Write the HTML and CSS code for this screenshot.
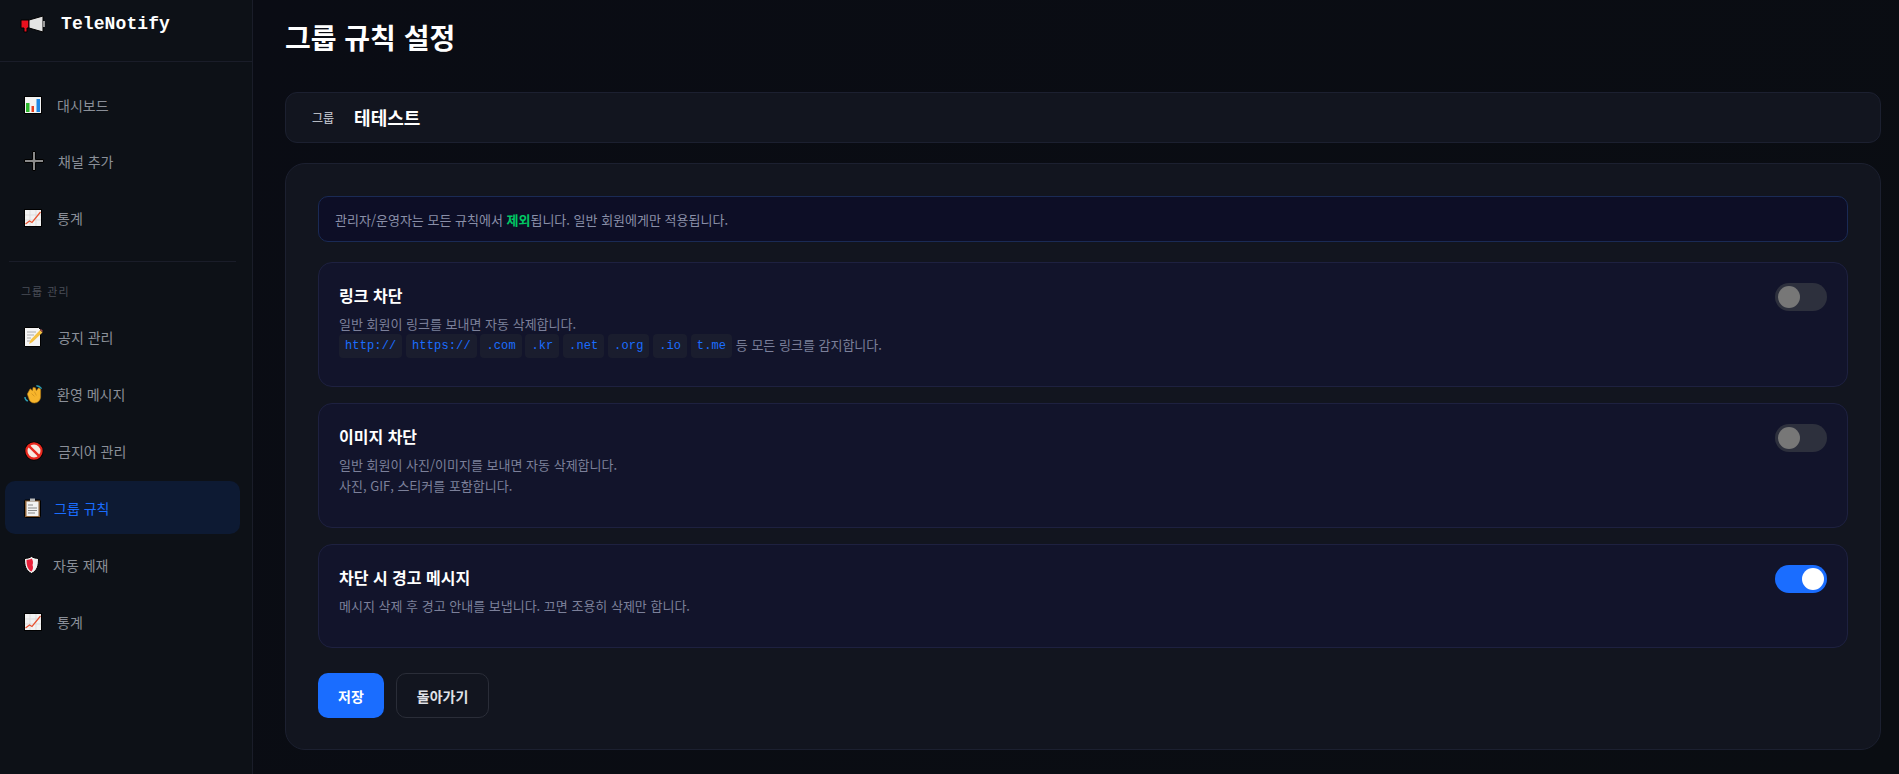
FILE: index.html
```html
<!DOCTYPE html>
<html lang="ko">
<head>
<meta charset="utf-8">
<title>그룹 규칙 설정</title>
<link rel="stylesheet" href="styles.css">
</head>
<body>
<div class="app">
  <aside class="sidebar">
    <div class="brand">
      <svg class="brand-icon" viewBox="0 0 26 18"><path d="M1 5h8v8H7v4H4v-4H1z" fill="#e8101e" stroke="#000"/><path d="M9 5l14-4v16L9 13z" fill="#e4e4e4" stroke="#000"/><path d="M23 6h2v6h-2z" fill="#999"/></svg>
      <span class="brand-name">TeleNotify</span>
    </div>
    <nav class="nav">
      <a class="nav-item"><svg class="ico i18" viewBox="0 0 18 18"><rect x=".5" y=".5" width="17" height="17" fill="#f4f4f4" stroke="#000"/><path d="M2 7h3.500v9H2z" fill="#2eb82e"/><path d="M7.500 10H10v6H7.500z" fill="#e8401e"/><path d="M12.500 3H16v13h-3.500z" fill="#1e88e5"/></svg>대시보드</a>
      <a class="nav-item"><svg class="ico i20" viewBox="0 0 20 20"><path d="M8.500 .5h3v8h8v3h-8v8h-3v-8h-8v-3h8z" fill="#8a8a8a" stroke="#000"/></svg>채널 추가</a>
      <a class="nav-item"><svg class="ico i18" viewBox="0 0 18 18"><rect x=".5" y=".5" width="17" height="17" fill="#f2f2f2" stroke="#000"/><path d="M1 6h16M1 11h16M6 1v16M12 1v16" stroke="#d8d8d8" stroke-width=".7"/><path d="M1.500 15l4-3 2.500 1.500L16.500 3" fill="none" stroke="#e8502e" stroke-width="1.200"/></svg>통계</a>
      <div class="nav-divider"></div>
      <div class="nav-label">그룹 관리</div>
      <a class="nav-item"><svg class="ico i20" viewBox="0 0 20 20"><path d="M.5.500h14l2 2v17H.5z" fill="#f4f4f4" stroke="#000"/><path d="M3 5h9M3 8h7M3 11h4M3 14h3" stroke="#aaa"/><path d="M5 17l1.500-4L16 3l2.500 2.500-10 9.500z" fill="#f5c243"/><path d="M16 3l1-1 2 2-1 1z" fill="#a04a4a"/></svg>공지 관리</a>
      <a class="nav-item"><svg class="ico i19" viewBox="0 0 20 20"><path d="M3.500 9.500L6.500 4 9 6l.5-3.500L12 3l1 3 2.500-3 2 1.500L17.500 13c-.5 3.500-3 6-6.500 6-3 0-5.500-2-6-5z" fill="#f7b52c" stroke="#b37a12" stroke-width=".6"/><path d="M8 9l3 3M11 7l2 4" stroke="#c58a1a" stroke-width=".7"/><path d="M1 12.500c0 2 1 3.500 3 4.500M13 .8c2 0 4 1 5.500 3" fill="none" stroke="#2b9db3" stroke-width="1.500"/></svg>환영 메시지</a>
      <a class="nav-item"><svg class="ico i20" viewBox="0 0 20 20"><circle cx="10" cy="10" r="9.500" fill="#000"/><circle cx="10" cy="10" r="7.600" fill="#f7e9e0" stroke="#e8281e" stroke-width="2.200"/><path d="M4.800 4.800l10.400 10.400" stroke="#e8281e" stroke-width="2.400"/></svg>금지어 관리</a>
      <a class="nav-item active"><svg class="ico i17" viewBox="0 0 17 20"><rect x=".5" y="2" width="16" height="17.500" rx="1" fill="#8a6038" stroke="#000"/><rect x="2.500" y="3.500" width="12" height="14.500" fill="#f2f2f2"/><path d="M4 7h5M4 10h9M4 12.500h9M4 15h7" stroke="#888"/><rect x="6" y=".5" width="5" height="3" fill="#bbb"/></svg>그룹 규칙</a>
      <a class="nav-item"><svg class="ico i15" viewBox="0 0 15 18"><path d="M7.500.5c2 1.300 4 1.800 7 2 0 7-1 12-7 15-6-3-7-8-7-15 3-.2 5-.7 7-2z" fill="#f0f0f0" stroke="#000"/><path d="M7.500 2.500c-1.500 1-3 1.300-5 1.500 0 5 1 9.500 5 11.500 1.500-2 2-4 1-6.500 1-2.500.5-5-1-6.500z" fill="#e8203a"/></svg>자동 제재</a>
      <a class="nav-item"><svg class="ico i18" viewBox="0 0 18 18"><rect x=".5" y=".5" width="17" height="17" fill="#f2f2f2" stroke="#000"/><path d="M1 6h16M1 11h16M6 1v16M12 1v16" stroke="#d8d8d8" stroke-width=".7"/><path d="M1.500 15l4-3 2.500 1.500L16.500 3" fill="none" stroke="#e8502e" stroke-width="1.200"/></svg>통계</a>
    </nav>
  </aside>
  <main class="main">
    <h1 class="page-title">그룹 규칙 설정</h1>
    <section class="group-card">
      <span class="group-label">그룹</span>
      <span class="group-name">테테스트</span>
    </section>
    <section class="panel">
      <div class="notice">관리자/운영자는 모든 규칙에서 <strong class="hl">제외</strong>됩니다. 일반 회원에게만 적용됩니다.</div>
      <div class="rule">
        <div class="rule-text">
          <div class="rule-title">링크 차단</div>
          <div class="rule-desc">일반 회원이 링크를 보내면 자동 삭제합니다.<br>
            <code>http://</code> <code>https://</code> <code>.com</code> <code>.kr</code> <code>.net</code> <code>.org</code> <code>.io</code> <code>t.me</code> 등 모든 링크를 감지합니다.</div>
        </div>
        <span class="toggle"><span class="knob"></span></span>
      </div>
      <div class="rule">
        <div class="rule-text">
          <div class="rule-title">이미지 차단</div>
          <div class="rule-desc">일반 회원이 사진/이미지를 보내면 자동 삭제합니다.<br>사진, GIF, 스티커를 포함합니다.</div>
        </div>
        <span class="toggle"><span class="knob"></span></span>
      </div>
      <div class="rule">
        <div class="rule-text">
          <div class="rule-title">차단 시 경고 메시지</div>
          <div class="rule-desc">메시지 삭제 후 경고 안내를 보냅니다. 끄면 조용히 삭제만 합니다.</div>
        </div>
        <span class="toggle on"><span class="knob"></span></span>
      </div>
      <div class="actions">
        <button class="btn primary">저장</button>
        <button class="btn ghost">돌아가기</button>
      </div>
    </section>
  </main>
</div>
</body>
</html>
```
FILE: styles.css
```css
* { box-sizing: border-box; }
html, body { margin: 0; height: 100%; }
body {
  font-family: "Noto Sans CJK KR", "Noto Sans", sans-serif;
  background: #0a0c14;
  color: #fff;
  overflow: hidden;
}
.app { display: flex; height: 774px; }
.sidebar {
  width: 253px;
  flex: none;
  background: #0d1117;
  border-right: 1px solid #1a1d29;
  display: flex;
  flex-direction: column;
}
.brand {
  height: 62px;
  flex: none;
  padding: 0 20px 14px 20px;
  display: flex;
  align-items: center;
  gap: 15px;
  border-bottom: 1px solid #1a1d29;
}
.brand-icon { width: 26px; height: 18px; flex: none; }
.brand-name {
  font-family: "Liberation Mono", monospace;
  font-weight: 700;
  font-size: 18px;
  letter-spacing: .1px;
  line-height: 24px;
}
.nav { padding: 16px 0 0 5px; width: 240px; display: flex; flex-direction: column; }
.nav-item {
  height: 53px;
  margin-bottom: 3.900px;
  padding-left: 19px;
  display: flex;
  align-items: center;
  font-size: 14px;
  color: #8a8f98;
  border-radius: 10px;
}
.nav-item.active { background: #0d1a33; color: #1a6dff; }
.ico { flex: none; display: block; }
.i15 { width: 15px; height: 18px; margin-right: 14px; }
.i17 { width: 17px; height: 20px; margin-right: 13px; }
.i18 { width: 18px; height: 18px; margin-right: 15px; }
.i19 { width: 19px; height: 19px; margin-right: 14px; }
.i20 { width: 20px; height: 20px; margin-right: 14px; }
.nav-divider { height: 1px; background: #1a1d29; margin: 12px 4px 0 4px; }
.nav-label {
  font-size: 11px;
  letter-spacing: 1px;
  line-height: 16px;
  color: #4a4e57;
  padding: 21px 0 12px 16px;
}
.main {
  flex: 1;
  min-width: 0;
  padding: 17px 18px 0 32px;
  background: linear-gradient(135deg, #0a0c14, #0a0d12);
  display: flex;
  flex-direction: column;
}
.page-title {
  margin: 0 0 34px;
  font-size: 28px;
  line-height: 41px;
  font-weight: 700;
}
.group-card {
  height: 51px;
  background: #12151f;
  border: 1px solid #1c2030;
  border-radius: 12px;
  padding: 0 26px;
  display: flex;
  align-items: center;
  gap: 20px;
  margin-bottom: 20px;
}
.group-label { font-size: 12px; font-weight: 500; color: #b4b8c0; }
.group-name { font-size: 18px; font-weight: 700; line-height: 24px; margin-top: -2px; }
.panel {
  background: #12151f;
  border: 1px solid #1c2030;
  border-radius: 20px;
  padding: 32px;
  height: 587px;
}
.notice {
  height: 46px;
  display: flex;
  align-items: center;
  white-space: pre-wrap;
  background: #0d0e26;
  border: 1px solid #1a2a55;
  border-radius: 10px;
  padding: 0 16px;
  font-size: 13px;
  color: #8a8fa8;
  margin-bottom: 20px;
}
.hl { color: #00c864; font-weight: 700; }
.rule {
  display: flex;
  justify-content: space-between;
  align-items: flex-start;
  background: #12142b;
  border: 1px solid #1e2140;
  border-radius: 14px;
  padding: 20px 20px 30.500px;
  margin-bottom: 16px;
}
.rule-title { font-size: 16px; font-weight: 700; line-height: 24px; margin-bottom: 7px; }
.rule-desc { font-size: 13px; line-height: 20.800px; color: #7c809a; }
code {
  font-family: "Liberation Mono", monospace;
  font-size: 12px;
  line-height: 1;
  letter-spacing: .14px;
  vertical-align: 1px;
  color: #1a6dff;
  background: #1a1d2e;
  padding: 5px 6px;
  border-radius: 4px;
}
.toggle {
  flex: none;
  width: 52px;
  height: 28px;
  border-radius: 14px;
  background: #2d303d;
  padding: 3px;
  display: flex;
}
.knob { width: 22px; height: 22px; border-radius: 50%; background: #777; }
.toggle.on { background: #1a6dff; justify-content: flex-end; }
.toggle.on .knob { background: #fff; }
.actions { display: flex; gap: 12px; margin-top: 25px; }
.btn {
  font-family: inherit;
  font-size: 14px;
  font-weight: 700;
  height: 45px;
  border-radius: 10px;
  padding: 0 20px;
  color: #fff;
}
.primary { background: #1a6dff; border: none; }
.ghost { background: transparent; border: 1px solid #2a2d38; color: #e0e2e8; }
```
